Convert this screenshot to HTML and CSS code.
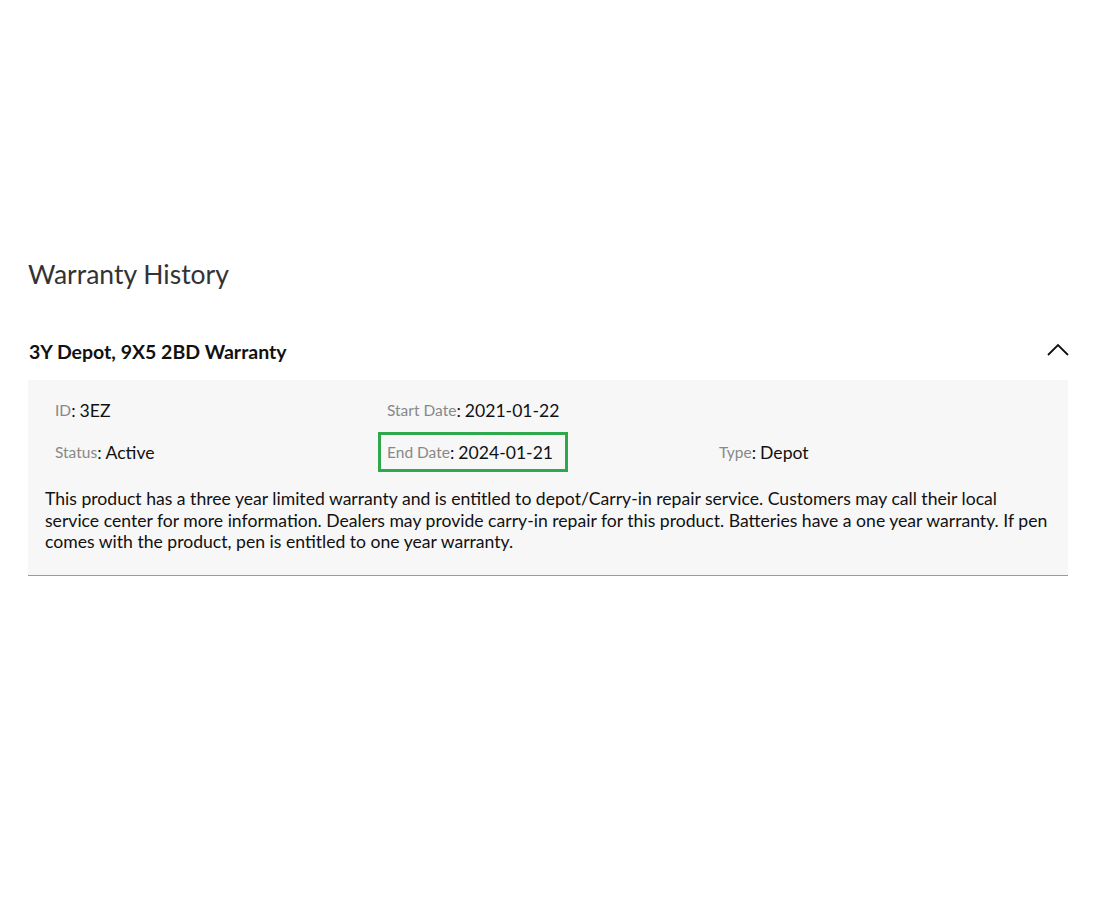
FILE: index.html
```
<!DOCTYPE html>
<html>
<head>
<meta charset="utf-8">
<link rel="stylesheet" href="styles.css">
</head>
<body>
<main class="page">
  <h1 class="title">Warranty History</h1>
  <section class="warranty">
    <div class="warranty-head">
      <h2 class="warranty-name">3Y Depot, 9X5 2BD Warranty</h2>
      <svg class="chevron" width="22" height="13" viewBox="0 0 22 13"><path d="M1 12 L11 2 L21 12" fill="none" stroke="#111" stroke-width="1.8"/></svg>
    </div>
    <div class="warranty-body">
      <div class="fields">
        <div class="field"><span class="label">ID</span>: <span class="value">3EZ</span></div>
        <div class="field"><span class="label">Start Date</span>: <span class="value">2021-01-22</span></div>
        <div class="field"></div>
        <div class="field"><span class="label">Status</span>: <span class="value">Active</span></div>
        <div class="field"><span class="highlight"><span class="label">End Date</span>: <span class="value">2024-01-21</span></span></div>
        <div class="field"><span class="label">Type</span>: <span class="value">Depot</span></div>
      </div>
      <p class="desc">This product has a three year limited warranty and is entitled to depot/Carry-in repair service. Customers may call their local service center for more information. Dealers may provide carry-in repair for this product. Batteries have a one year warranty. If pen comes with the product, pen is entitled to one year warranty.</p>
    </div>
  </section>
</main>
</body>
</html>
```
FILE: styles.css
```
html, body { margin: 0; padding: 0; background: #fff; }
body { font-family: Lato, "Open Sans", sans-serif; color: #111; }
.page { padding: 257px 27px 0 28px; }
.title { margin: 0; font-size: 26.5px; font-weight: 400; color: #333; line-height: 34px; }
.warranty { margin-top: 40px; }
.warranty-head { display: flex; justify-content: space-between; align-items: center; height: 40px; padding-left: 1px; }
.warranty-name { margin: 0; font-size: 19.5px; font-weight: 700; color: #111; }
.chevron { margin-right: -1px; margin-top: -4px; }
.warranty-body { background: #f7f7f7; border-bottom: 1px solid #999; padding: 9px 17px 22px 17px; margin-top: 9px; }
.fields { display: grid; grid-template-columns: 332px 332px 1fr; padding-left: 10px; }
.field { height: 42px; display: flex; align-items: center; font-size: 17.6px; color: #111; }
.label { font-size: 15.5px; color: #888; }
.value { margin-left: 4px; }
.highlight { display: inline-flex; align-items: center; border: 3px solid #2fa84b; height: 34px; padding: 0 12px 0 6px; margin-left: -9px; }
.desc { margin: 15px 0 0 0; font-size: 17.6px; line-height: 21.5px; color: #111; }
```
